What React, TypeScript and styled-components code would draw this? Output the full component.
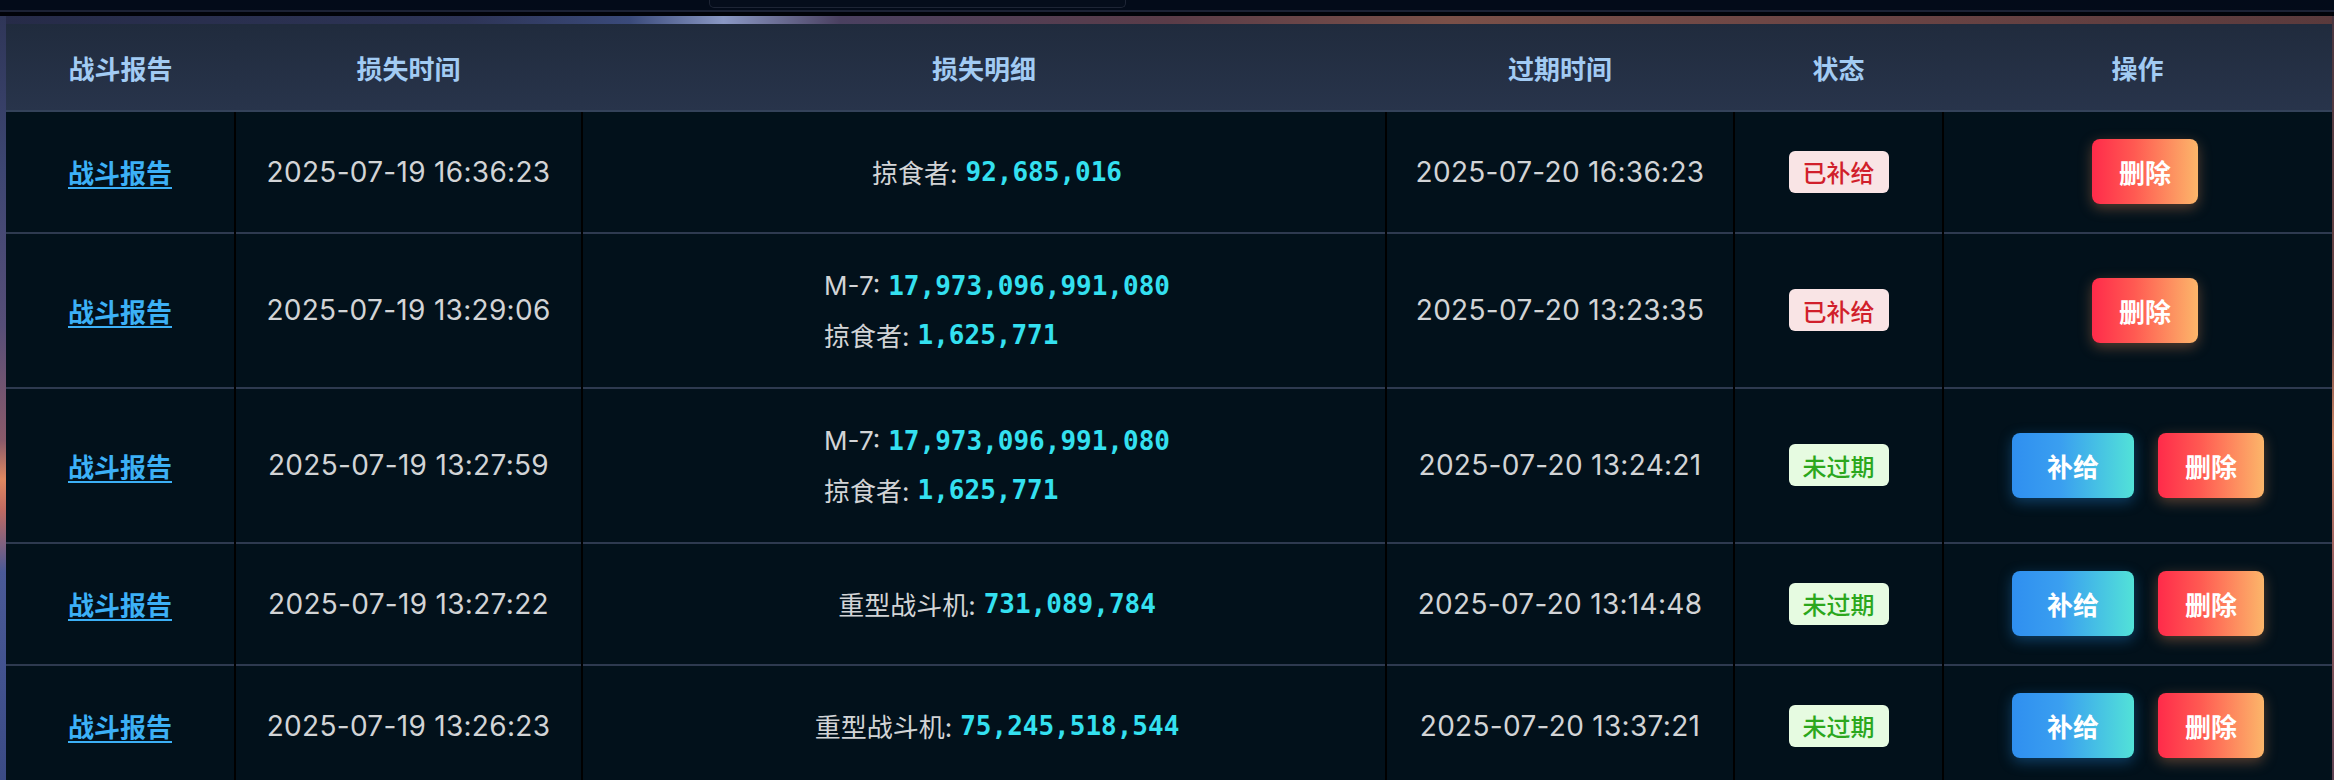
import React from 'react'
import styled, { createGlobalStyle } from 'styled-components'

const GlobalStyle = createGlobalStyle`
html, body {
    margin: 0;
    padding: 0;
    background: #02050c;
    overflow: hidden;
}
body {
    font-family: "Inter", "Noto Sans CJK SC", sans-serif;
}
`

const Page = styled.div`
width: 2334px;
height: 780px;
display: flex;
flex-direction: column;
background: #02050c;
`
const TopBar = styled.div`
height: 10px;
flex-shrink: 0;
display: flex;
background: #030b19;
border-bottom: 2px solid #1c2235;
`
const SearchStub = styled.div`
margin-left: 709px;
width: 415px;
height: 7px;
border: 1px solid #1e2535;
border-top: none;
border-radius: 0 0 5px 5px;
background: #050d1b;
`
const Gap = styled.div`
height: 4px;
flex-shrink: 0;
background: #010309;
`
const Scene = styled.div`
flex: 1;
padding: 8px 2px 0 6px;
background:
    linear-gradient(to bottom, #2f3658 0%, #3d4672 20%, #564e78 40%, #8a5a6a 55%, #e08860 60%, #c06a62 64%, #4a5a98 72%, #3a4a84 100%) left top / 6px 100% no-repeat,
    linear-gradient(to bottom, #4a3640 0%, #6a4444 40%, #d08866 55%, #9a6060 70%, #5a4050 100%) right top / 2px 100% no-repeat,
    linear-gradient(to right, #262b48 0%, #2d3456 20%, #3a4a7a 27%, #8a98c4 31%, #4a4060 36%, #5a3c48 50%, #7a5048 62%, #6a4444 80%, #5a3a3c 100%);
`
const Table = styled.table`
width: 2326px;
border-collapse: collapse;
table-layout: fixed;
`
const HeadCell = styled.th`
height: 86px;
padding: 0;
font-size: 26px;
font-weight: 700;
color: #a2cbf3;
text-align: center;
background: linear-gradient(to bottom, #202b3d, #28344b);
border-bottom: 2px solid #34425a;
`
const Row = styled.tr`
background: #02111b;
border-bottom: 2px solid #2e3a50;
`
const Cell = styled.td<{ $shift?: boolean }>`
padding: 27px 12px 28px ${p => (p.$shift ? '38px' : '12px')};
text-align: center;
vertical-align: middle;
font-size: 26px;
color: #d2d4d6;
border-right: 2px solid #000;
&:last-child {
    border-right: none;
}
`
const ReportLink = styled.a`
font-size: 26px;
font-weight: 600;
color: #3cb0f6;
text-decoration: underline;
text-underline-offset: 4px;
cursor: pointer;
`
const Stamp = styled.span`
font-size: 28px;
letter-spacing: 0.3px;
`
const DetailList = styled.div`
display: inline-flex;
flex-direction: column;
align-items: flex-start;
vertical-align: top;
`
const DetailLine = styled.div`
height: 49px;
display: flex;
align-items: center;
white-space: nowrap;
`
const Amount = styled.span`
font-family: "DejaVu Sans Mono", monospace;
font-weight: 700;
color: #34e0f0;
margin-left: 8px;
`
const Badge = styled.span<{ $tone: 'done' | 'live' }>`
display: inline-flex;
align-items: center;
height: 42px;
padding: 0 14px;
border-radius: 6px;
font-size: 24px;
font-weight: 500;
background: ${p => (p.$tone === 'done' ? '#f9e4e5' : '#e6fbe1')};
color: ${p => (p.$tone === 'done' ? '#d11f2b' : '#2ba71c')};
`
const Actions = styled.div<{ $solo: boolean }>`
display: flex;
justify-content: center;
gap: 24px;
padding-left: ${p => (p.$solo ? '14px' : '0')};
`
const ActionButton = styled.button<{ $kind: 'supply' | 'delete' }>`
height: 65px;
padding: 0 ${p => (p.$kind === 'supply' ? '35px' : '27px')};
border: none;
border-radius: 8px;
font-family: "Noto Sans CJK SC", sans-serif;
font-size: 26px;
font-weight: 700;
color: #fff;
cursor: pointer;
background: ${p => (p.$kind === 'supply'
        ? 'linear-gradient(to right, #2f8ff0 0%, #3a9ff0 40%, #52e2d8 100%)'
        : 'linear-gradient(to right, #ff2b4a 0%, #ff5a52 40%, #fcb66a 100%)')};
box-shadow: ${p => (p.$kind === 'supply'
        ? '0 4px 14px rgba(40, 150, 240, 0.35)'
        : '0 4px 14px rgba(250, 150, 90, 0.35)')};
`

interface Loss {
    lostAt: string
    items: [string, string][]
    expireAt: string
    supplied: boolean
}

const losses: Loss[] = [
    { lostAt: '2025-07-19 16:36:23', items: [['掠食者', '92,685,016']], expireAt: '2025-07-20 16:36:23', supplied: true },
    { lostAt: '2025-07-19 13:29:06', items: [['M-7', '17,973,096,991,080'], ['掠食者', '1,625,771']], expireAt: '2025-07-20 13:23:35', supplied: true },
    { lostAt: '2025-07-19 13:27:59', items: [['M-7', '17,973,096,991,080'], ['掠食者', '1,625,771']], expireAt: '2025-07-20 13:24:21', supplied: false },
    { lostAt: '2025-07-19 13:27:22', items: [['重型战斗机', '731,089,784']], expireAt: '2025-07-20 13:14:48', supplied: false },
    { lostAt: '2025-07-19 13:26:23', items: [['重型战斗机', '75,245,518,544']], expireAt: '2025-07-20 13:37:21', supplied: false },
]

const columns = [
    { title: '战斗报告', width: 229 },
    { title: '损失时间', width: 347 },
    { title: '损失明细', width: 804 },
    { title: '过期时间', width: 348 },
    { title: '状态', width: 209 },
    { title: '操作', width: 389 },
]

export default function App() {
    return (
        <Page>
            <GlobalStyle />
            <TopBar>
                <SearchStub />
            </TopBar>
            <Gap />
            <Scene>
                <Table>
                    <colgroup>
                        {columns.map(col => <col key={col.title} style={{ width: col.width }} />)}
                    </colgroup>
                    <thead>
                        <tr>
                            {columns.map(col => <HeadCell key={col.title}>{col.title}</HeadCell>)}
                        </tr>
                    </thead>
                    <tbody>
                        {losses.map((loss, index) => (
                            <Row key={index}>
                                <Cell><ReportLink>战斗报告</ReportLink></Cell>
                                <Cell><Stamp>{loss.lostAt}</Stamp></Cell>
                                <Cell $shift>
                                    <DetailList>
                                        {loss.items.map(([name, count]) => (
                                            <DetailLine key={name}>
                                                {name}:<Amount>{count}</Amount>
                                            </DetailLine>
                                        ))}
                                    </DetailList>
                                </Cell>
                                <Cell><Stamp>{loss.expireAt}</Stamp></Cell>
                                <Cell>
                                    <Badge $tone={loss.supplied ? 'done' : 'live'}>
                                        {loss.supplied ? '已补给' : '未过期'}
                                    </Badge>
                                </Cell>
                                <Cell>
                                    <Actions $solo={loss.supplied}>
                                        {!loss.supplied && <ActionButton $kind='supply'>补给</ActionButton>}
                                        <ActionButton $kind='delete'>删除</ActionButton>
                                    </Actions>
                                </Cell>
                            </Row>
                        ))}
                    </tbody>
                </Table>
            </Scene>
        </Page>
    )
}
